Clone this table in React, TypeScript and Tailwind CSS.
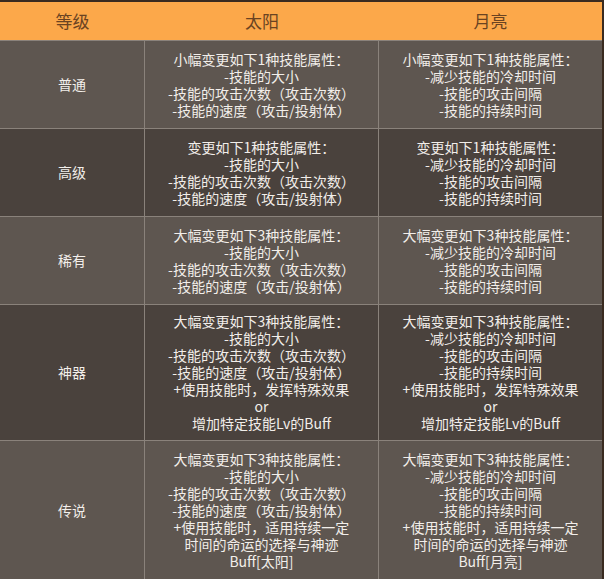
import React from "react";

type Row = { name: string; sun: string[]; moon: string[]; h: string; dark: boolean };

const rows: Row[] = [
  {
    name: "普通",
    h: "h-[88px]",
    dark: false,
    sun: ["小幅变更如下1种技能属性：", "-技能的大小", "-技能的攻击次数（攻击次数）", "-技能的速度（攻击/投射体）"],
    moon: ["小幅变更如下1种技能属性：", "-减少技能的冷却时间", "-技能的攻击间隔", "-技能的持续时间"],
  },
  {
    name: "高级",
    h: "h-[88px]",
    dark: true,
    sun: ["变更如下1种技能属性：", "-技能的大小", "-技能的攻击次数（攻击次数）", "-技能的速度（攻击/投射体）"],
    moon: ["变更如下1种技能属性：", "-减少技能的冷却时间", "-技能的攻击间隔", "-技能的持续时间"],
  },
  {
    name: "稀有",
    h: "h-[88px]",
    dark: false,
    sun: ["大幅变更如下3种技能属性：", "-技能的大小", "-技能的攻击次数（攻击次数）", "-技能的速度（攻击/投射体）"],
    moon: ["大幅变更如下3种技能属性：", "-减少技能的冷却时间", "-技能的攻击间隔", "-技能的持续时间"],
  },
  {
    name: "神器",
    h: "h-[136px]",
    dark: true,
    sun: [
      "大幅变更如下3种技能属性：",
      "-技能的大小",
      "-技能的攻击次数（攻击次数）",
      "-技能的速度（攻击/投射体）",
      "+使用技能时，发挥特殊效果",
      "or",
      "增加特定技能Lv的Buff",
    ],
    moon: [
      "大幅变更如下3种技能属性：",
      "-减少技能的冷却时间",
      "-技能的攻击间隔",
      "-技能的持续时间",
      "+使用技能时，发挥特殊效果",
      "or",
      "增加特定技能Lv的Buff",
    ],
  },
  {
    name: "传说",
    h: "h-[139px]",
    dark: false,
    sun: [
      "大幅变更如下3种技能属性：",
      "-技能的大小",
      "-技能的攻击次数（攻击次数）",
      "-技能的速度（攻击/投射体）",
      "+使用技能时，适用持续一定",
      "时间的命运的选择与神迹",
      "Buff[太阳]",
    ],
    moon: [
      "大幅变更如下3种技能属性：",
      "-减少技能的冷却时间",
      "-技能的攻击间隔",
      "-技能的持续时间",
      "+使用技能时，适用持续一定",
      "时间的命运的选择与神迹",
      "Buff[月亮]",
    ],
  },
];

function Lines({ lines }: { lines: string[] }) {
  return (
    <div className="flex flex-col items-center text-center">
      {lines.map((l, i) => (
        <div key={i} className="leading-[17px] whitespace-nowrap">
          {l}
        </div>
      ))}
    </div>
  );
}

export default function App() {
  return (
    <div
      className="w-[604px] h-[579px] overflow-hidden bg-[#5d554f] border-t-2 border-r-2 border-[#3a2b20] text-[14px] text-[#f2eeea]"
      style={{ fontFamily: '"Noto Sans CJK SC", "Noto Sans", sans-serif' }}
    >
      <div className="grid grid-cols-[145px_234px_223px] h-[39px] bg-[#fca84a] border-b border-[#8a827b] text-[17px] text-[#6a4322]">
        <div className="flex items-center justify-center">等级</div>
        <div className="flex items-center justify-center">太阳</div>
        <div className="flex items-center justify-center">月亮</div>
      </div>
      {rows.map((r, i) => (
        <div
          key={i}
          className={`grid grid-cols-[145px_234px_223px] ${r.h} ${r.dark ? "bg-[#4a423d]" : "bg-[#5e5650]"} ${
            i < rows.length - 1 ? "border-b border-[#8a827b]" : ""
          }`}
        >
          <div className="flex items-center justify-center border-r border-[#8a827b]">{r.name}</div>
          <div className="flex items-center justify-center border-r border-[#8a827b]">
            <Lines lines={r.sun} />
          </div>
          <div className="flex items-center justify-center">
            <Lines lines={r.moon} />
          </div>
        </div>
      ))}
    </div>
  );
}
